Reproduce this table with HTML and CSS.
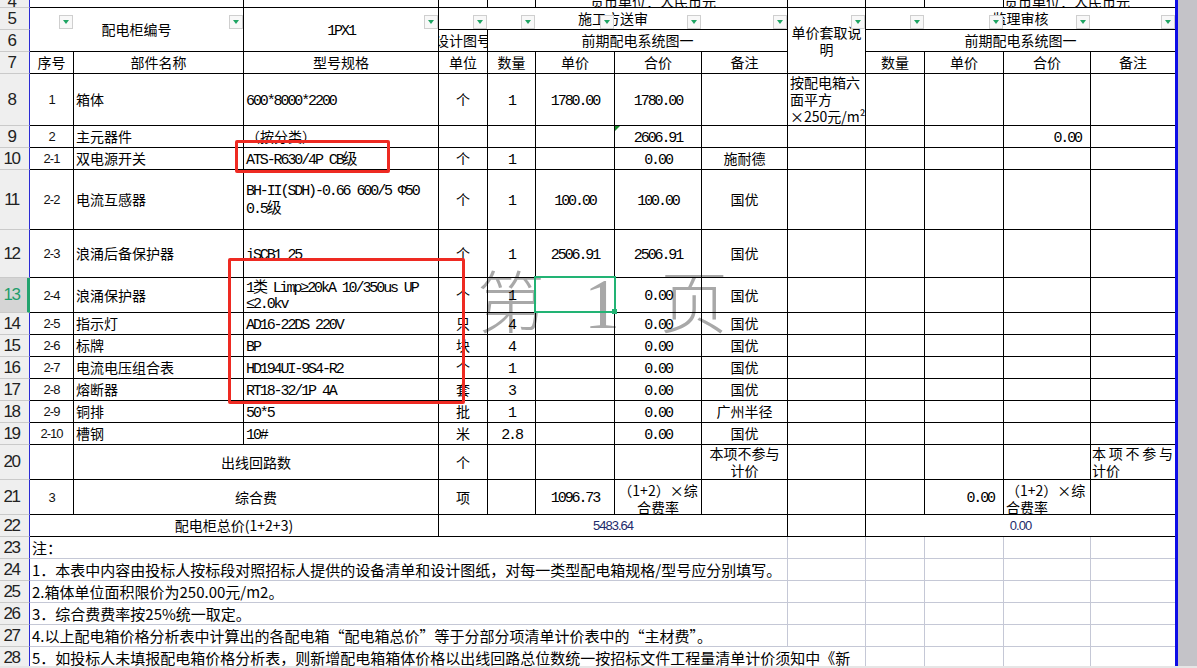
FILE: index.html
```html
<!DOCTYPE html>
<html lang="zh-CN">
<head>
<meta charset="utf-8">
<title>配电箱价格分析表</title>
<link rel="stylesheet" href="styles.css">
</head>
<body>
<div class="page">
  <div class="wm"><span>第</span><span class="wm1">1</span><span class="wm3">页</span></div>
  <div class="sheet">
    <!-- row 4 -->
    <div class="rh r4">4</div>
    <div class="c s2"></div>
    <div class="c"></div>
    <div class="c"></div>
    <div class="c"></div>
    <div class="c s3 top pl54">货币单位：人民币元</div>
    <div class="c"></div>
    <div class="c"></div>
    <div class="c"></div>
    <div class="c s2 top">货币单位：人民币元</div>
    <!-- row 5 -->
    <div class="rh">5</div>
    <div class="c s2 v2">配电柜编号</div>
    <div class="c v2 m">1PX1</div>
    <div class="c s5">施工方送审</div>
    <div class="c v3 w">单价套取说明</div>
    <div class="c s4">监理审核</div>
    <!-- row 6 -->
    <div class="rh">6</div>
    <div class="c">设计图号</div>
    <div class="c s4">前期配电系统图一</div>
    <div class="c s4">前期配电系统图一</div>
    <!-- row 7 -->
    <div class="rh">7</div>
    <div class="c">序号</div>
    <div class="c">部件名称</div>
    <div class="c">型号规格</div>
    <div class="c">单位</div>
    <div class="c">数量</div>
    <div class="c">单价</div>
    <div class="c">合价</div>
    <div class="c">备注</div>
    <div class="c">数量</div>
    <div class="c">单价</div>
    <div class="c">合价</div>
    <div class="c">备注</div>
    <!-- row 8 -->
    <div class="rh">8</div>
    <div class="c n">1</div>
    <div class="c l">箱体</div>
    <div class="c l m">600*8000*2200</div>
    <div class="c">个</div>
    <div class="c m">1</div>
    <div class="c m">1780.00</div>
    <div class="c m">1780.00</div>
    <div class="c"></div>
    <div class="c l nwl">按配电箱六<br>面平方<br>×250元/m²</div>
    <div class="c"></div>
    <div class="c"></div>
    <div class="c"></div>
    <div class="c"></div>
    <!-- row 9 -->
    <div class="rh">9</div>
    <div class="c n">2</div>
    <div class="c l">主元器件</div>
    <div class="c l">（按分类）</div>
    <div class="c"></div>
    <div class="c"></div>
    <div class="c"></div>
    <div class="c m tri">2606.91</div>
    <div class="c"></div>
    <div class="c"></div>
    <div class="c"></div>
    <div class="c"></div>
    <div class="c m r">0.00</div>
    <div class="c"></div>
    <!-- row 10 -->
    <div class="rh">10</div>
    <div class="c n">2-1</div>
    <div class="c l">双电源开关</div>
    <div class="c l m">ATS-R630/4P CB级</div>
    <div class="c">个</div>
    <div class="c m">1</div>
    <div class="c"></div>
    <div class="c m">0.00</div>
    <div class="c">施耐德</div>
    <div class="c"></div>
    <div class="c"></div>
    <div class="c"></div>
    <div class="c"></div>
    <div class="c"></div>
    <!-- row 11 -->
    <div class="rh">11</div>
    <div class="c n">2-2</div>
    <div class="c l">电流互感器</div>
    <div class="c l m nwl lh18">BH-II(SDH)-0.66 600/5 Φ50<br>0.5级</div>
    <div class="c">个</div>
    <div class="c m">1</div>
    <div class="c m">100.00</div>
    <div class="c m">100.00</div>
    <div class="c">国优</div>
    <div class="c"></div>
    <div class="c"></div>
    <div class="c"></div>
    <div class="c"></div>
    <div class="c"></div>
    <!-- row 12 -->
    <div class="rh">12</div>
    <div class="c n">2-3</div>
    <div class="c l">浪涌后备保护器</div>
    <div class="c l m">iSCB1 25</div>
    <div class="c">个</div>
    <div class="c m">1</div>
    <div class="c m">2506.91</div>
    <div class="c m">2506.91</div>
    <div class="c">国优</div>
    <div class="c"></div>
    <div class="c"></div>
    <div class="c"></div>
    <div class="c"></div>
    <div class="c"></div>
    <!-- row 13 -->
    <div class="rh sel">13</div>
    <div class="c n">2-4</div>
    <div class="c l">浪涌保护器</div>
    <div class="c l m nwl lh16">1类 Limp≥20kA 10/350us UP<br>≤2.0kv</div>
    <div class="c">个</div>
    <div class="c m">1</div>
    <div class="c"></div>
    <div class="c m">0.00</div>
    <div class="c">国优</div>
    <div class="c"></div>
    <div class="c"></div>
    <div class="c"></div>
    <div class="c"></div>
    <div class="c"></div>
    <!-- row 14 -->
    <div class="rh">14</div>
    <div class="c n">2-5</div>
    <div class="c l">指示灯</div>
    <div class="c l m">AD16-22DS 220V</div>
    <div class="c">只</div>
    <div class="c m">4</div>
    <div class="c"></div>
    <div class="c m">0.00</div>
    <div class="c">国优</div>
    <div class="c"></div>
    <div class="c"></div>
    <div class="c"></div>
    <div class="c"></div>
    <div class="c"></div>
    <!-- row 15 -->
    <div class="rh">15</div>
    <div class="c n">2-6</div>
    <div class="c l">标牌</div>
    <div class="c l m">BP</div>
    <div class="c">块</div>
    <div class="c m">4</div>
    <div class="c"></div>
    <div class="c m">0.00</div>
    <div class="c">国优</div>
    <div class="c"></div>
    <div class="c"></div>
    <div class="c"></div>
    <div class="c"></div>
    <div class="c"></div>
    <!-- row 16 -->
    <div class="rh">16</div>
    <div class="c n">2-7</div>
    <div class="c l">电流电压组合表</div>
    <div class="c l m">HD194UI-9S4-R2</div>
    <div class="c">个</div>
    <div class="c m">1</div>
    <div class="c"></div>
    <div class="c m">0.00</div>
    <div class="c">国优</div>
    <div class="c"></div>
    <div class="c"></div>
    <div class="c"></div>
    <div class="c"></div>
    <div class="c"></div>
    <!-- row 17 -->
    <div class="rh">17</div>
    <div class="c n">2-8</div>
    <div class="c l">熔断器</div>
    <div class="c l m">RT18-32/1P 4A</div>
    <div class="c">套</div>
    <div class="c m">3</div>
    <div class="c"></div>
    <div class="c m">0.00</div>
    <div class="c">国优</div>
    <div class="c"></div>
    <div class="c"></div>
    <div class="c"></div>
    <div class="c"></div>
    <div class="c"></div>
    <!-- row 18 -->
    <div class="rh">18</div>
    <div class="c n">2-9</div>
    <div class="c l">铜排</div>
    <div class="c l m">50*5</div>
    <div class="c">批</div>
    <div class="c m">1</div>
    <div class="c"></div>
    <div class="c m">0.00</div>
    <div class="c">广州半径</div>
    <div class="c"></div>
    <div class="c"></div>
    <div class="c"></div>
    <div class="c"></div>
    <div class="c"></div>
    <!-- row 19 -->
    <div class="rh">19</div>
    <div class="c n">2-10</div>
    <div class="c l">槽钢</div>
    <div class="c l m">10#</div>
    <div class="c">米</div>
    <div class="c m">2.8</div>
    <div class="c"></div>
    <div class="c m">0.00</div>
    <div class="c">国优</div>
    <div class="c"></div>
    <div class="c"></div>
    <div class="c"></div>
    <div class="c"></div>
    <div class="c"></div>
    <!-- row 20 -->
    <div class="rh">20</div>
    <div class="c"></div>
    <div class="c s2">出线回路数</div>
    <div class="c">个</div>
    <div class="c"></div>
    <div class="c"></div>
    <div class="c"></div>
    <div class="c w">本项不参与<br>计价</div>
    <div class="c"></div>
    <div class="c"></div>
    <div class="c"></div>
    <div class="c"></div>
    <div class="c jz">本项不参与计价</div>
    <!-- row 21 -->
    <div class="rh">21</div>
    <div class="c n">3</div>
    <div class="c s2">综合费</div>
    <div class="c">项</div>
    <div class="c"></div>
    <div class="c m">1096.73</div>
    <div class="c w clipt">（1+2）×综<br>合费率</div>
    <div class="c"></div>
    <div class="c"></div>
    <div class="c"></div>
    <div class="c m r">0.00</div>
    <div class="c nwl clipt">（1+2）×综<br>合费率</div>
    <div class="c"></div>
    <!-- row 22 -->
    <div class="rh">22</div>
    <div class="c s3">配电柜总价(1+2+3)</div>
    <div class="c s5 n2">5483.64</div>
    <div class="c"></div>
    <div class="c s4 n2">0.00</div>
    <!-- row 23 -->
    <div class="rh">23</div>
    <div class="c g s8 note">注：</div>
    <div class="c g"></div><div class="c g"></div><div class="c g"></div><div class="c g"></div><div class="c g"></div>
    <!-- row 24 -->
    <div class="rh">24</div>
    <div class="c g s8 note">1．本表中内容由投标人按标段对照招标人提供的设备清单和设计图纸，对每一类型配电箱规格/型号应分别填写。</div>
    <div class="c g"></div><div class="c g"></div><div class="c g"></div><div class="c g"></div><div class="c g"></div>
    <!-- row 25 -->
    <div class="rh">25</div>
    <div class="c g s8 note">2.箱体单位面积限价为250.00元/m2。</div>
    <div class="c g"></div><div class="c g"></div><div class="c g"></div><div class="c g"></div><div class="c g"></div>
    <!-- row 26 -->
    <div class="rh">26</div>
    <div class="c g s8 note">3．综合费费率按25%统一取定。</div>
    <div class="c g"></div><div class="c g"></div><div class="c g"></div><div class="c g"></div><div class="c g"></div>
    <!-- row 27 -->
    <div class="rh">27</div>
    <div class="c g s8 note">4.以上配电箱价格分析表中计算出的各配电箱“配电箱总价”等于分部分项清单计价表中的“主材费”。</div>
    <div class="c g"></div><div class="c g"></div><div class="c g"></div><div class="c g"></div><div class="c g"></div>
    <!-- row 28 -->
    <div class="rh">28</div>
    <div class="c g s9 note">5．如投标人未填报配电箱价格分析表，则新增配电箱箱体价格以出线回路总位数统一按招标文件工程量清单计价须知中《新</div>
    <div class="c g"></div><div class="c g"></div><div class="c g"></div><div class="c g"></div>
  </div>
  <div class="pb"></div>
  <div class="gutter"></div>

  <div class="filters">
    <span></span>
    <span class="fb"></span><span class="fb"></span><span class="fb"></span><span class="fb"></span>
    <span class="fb"></span><span class="fb"></span><span class="fb"></span><span class="fb"></span>
    <span class="fb"></span><span class="fb"></span><span class="fb"></span><span class="fb"></span>
    <span class="fb"></span>
  </div>
  <div class="selbox"></div>
  <div class="redbox rb1"></div>
  <div class="redbox rb2"></div>
  <div class="hscroll"></div>
</div>
</body>
</html>
```

FILE: styles.css
```css
* { box-sizing: border-box; margin: 0; padding: 0; }
html, body { margin: 0; background: #ffffff; overflow: hidden; }

.page {
  position: relative;
  width: 1197px;
  height: 668px;
  overflow: hidden;
  display: flex;
  background: #ffffff;
}

.sheet {
  position: relative;
  z-index: 1;
  display: grid;
  grid-template-columns: 30px 44px 170px 195px 49px 48px 79px 87px 86px 78px 59px 79px 87px 85px;
  grid-template-rows: 8px 22px 22px 22px 52px 22px 22px 60px 48px 35px repeat(6, 22px) 35px 35px 22px repeat(6, 22px);
  width: 1176px;
  height: 669px;
  flex: none;
  font-family: "Noto Sans CJK SC", "Noto Sans", sans-serif;
  font-size: 14px;
  color: #000;
}

.pb {
  flex: none;
  width: 3px;
  margin-left: -1px;
  background: #0d0de6;
  position: relative;
  z-index: 2;
}
.gutter { flex: 1; background: #c4c3c8; }

/* row headers */
.rh {
  background: #efefef;
  border-right: 1px solid #2b2bd4;
  border-bottom: 1px solid #cacaca;
  display: flex;
  align-items: center;
  justify-content: center;
  padding-right: 6px;
  font-family: "Liberation Sans", Arial, sans-serif;
  font-size: 17px;
  letter-spacing: -1.5px;
  color: #222;
  overflow: hidden;
}
.rh.r4 { align-items: flex-end; line-height: 10px; }
.rh.sel { background: #d5d5d5; color: #1f9d6b; border-right: 3px solid #22a36e; padding-right: 4px; }

/* data cells */
.c {
  border-right: 1px solid #000;
  border-bottom: 1px solid #000;
  display: flex;
  align-items: center;
  justify-content: center;
  overflow: hidden;
  white-space: nowrap;
  line-height: 17px;
  min-width: 0;
}
.s2 { grid-column: span 2; }
.s3 { grid-column: span 3; }
.s4 { grid-column: span 4; }
.s5 { grid-column: span 5; }
.s8 { grid-column: span 8; }
.s9 { grid-column: span 9; }
.v2 { grid-row: span 2; }
.v3 { grid-row: span 3; }

.l { justify-content: flex-start; text-align: left; padding-left: 2px; }
.r { justify-content: flex-end; padding-right: 9px; }
.w { white-space: normal; text-align: center; }
.nwl { white-space: nowrap; text-align: left; justify-content: flex-start; padding-left: 2px; }
.lh18 { line-height: 18px; }
.lh16 { line-height: 16px; }
.clipt { align-items: flex-start; padding-top: 2px; }
.jz {
  white-space: normal;
  text-align: justify;
  justify-content: flex-start;
  padding: 0 2px 0 1px;
}

.m {
  font-family: "Liberation Mono", "Noto Sans CJK SC", monospace;
  font-size: 15px;
  letter-spacing: -2.1px;
  padding-top: 3px;
}
.n {
  font-family: "Liberation Sans", Arial, sans-serif;
  font-size: 13px;
  letter-spacing: -1px;
  color: #111;
}
.n2 {
  font-family: "Liberation Sans", Arial, sans-serif;
  font-size: 13px;
  letter-spacing: -1px;
  color: #1d2b6b;
}

.top {
  align-items: flex-end;
  justify-content: flex-start;
  line-height: 12px;
  padding-bottom: 0;
}
.pl54 { padding-left: 54px; }

.tri { position: relative; }
.tri::before {
  content: "";
  position: absolute;
  left: 0;
  top: 0;
  border-top: 5px solid #1a8a2c;
  border-right: 5px solid transparent;
}

.g { border-right-color: #c5c8d6; border-bottom-color: #c5c8d6; }
.note {
  justify-content: flex-start;
  padding-left: 2px;
  font-size: 15px;
  overflow: visible;
}

/* filter buttons */
.filters {
  position: absolute;
  left: 0;
  top: 15px;
  z-index: 3;
  display: grid;
  grid-template-columns: 30px 44px 170px 195px 49px 48px 79px 87px 86px 78px 59px 79px 87px 85px;
  height: 14px;
}
.fb {
  justify-self: end;
  margin-right: 1px;
  width: 14px;
  height: 14px;
  border: 1px solid #cfcfcf;
  background: #f8f8f8;
  position: relative;
}
.fb::after {
  content: "";
  position: absolute;
  left: 3px;
  top: 4px;
  border-left: 3.5px solid transparent;
  border-right: 3.5px solid transparent;
  border-top: 4px solid #1fa463;
}

/* watermark */
.wm {
  position: absolute;
  left: 477px;
  top: 265px;
  z-index: 0;
  display: flex;
  align-items: baseline;
  color: #a8a8a8;
  font-family: "Noto Sans CJK SC", sans-serif;
  font-weight: 300;
  font-size: 68px;
  line-height: 68px;
}
.wm1 { margin-left: 39px; font-family: "Liberation Serif", serif; font-size: 72px; font-weight: 400; }
.wm3 { margin-left: 40px; }

/* selection */
.selbox {
  position: absolute;
  left: 534px;
  top: 276px;
  width: 82px;
  height: 37px;
  border: 2px solid #22b374;
  z-index: 3;
}
.selbox::after {
  content: "";
  position: absolute;
  right: -3px;
  bottom: -3px;
  width: 5px;
  height: 5px;
  background: #22b374;
}

/* red annotations */
.redbox {
  position: absolute;
  border: 3px solid #ee2a22;
  border-radius: 2px;
  z-index: 4;
}
.rb1 { left: 235px; top: 140px; width: 155px; height: 33px; }
.rb2 { left: 228px; top: 258px; width: 237px; height: 146px; }

.hscroll {
  position: absolute;
  left: 0;
  right: 0;
  bottom: 0;
  height: 2px;
  background: #e6e6e6;
  z-index: 5;
}
```
